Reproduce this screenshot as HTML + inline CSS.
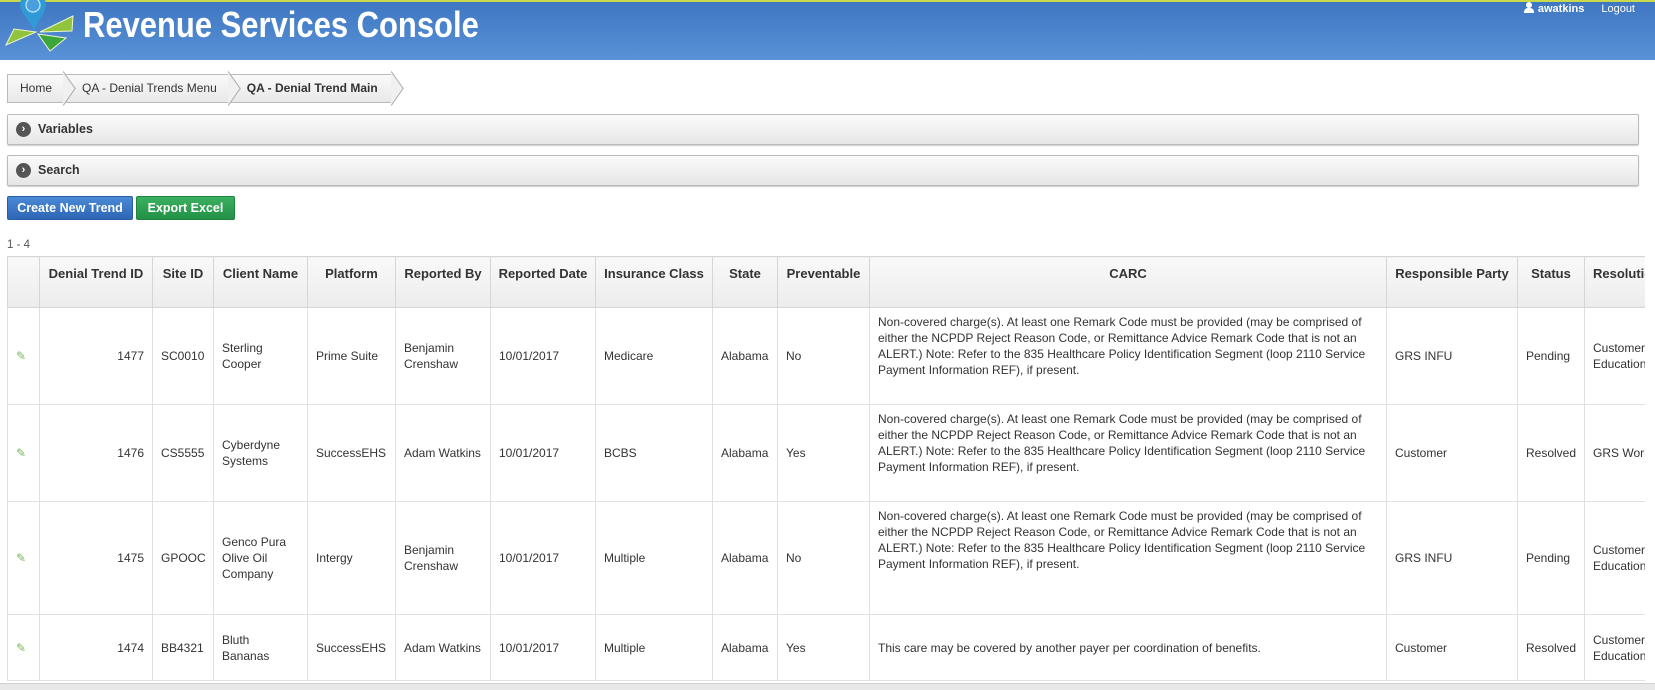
<!DOCTYPE html>
<html><head><meta charset="utf-8"><style>
*{box-sizing:border-box;margin:0;padding:0}
body{width:1655px;height:690px;overflow:hidden;background:#fff;font-family:"Liberation Sans",Arial,sans-serif;font-size:12px;color:#333;position:relative}
.hdr{position:absolute;left:0;top:0;width:1655px;height:60px;background:linear-gradient(#3e76c2,#5a92d7);border-top:2px solid #c8d94a}
.title{position:absolute;left:83px;top:2px;color:#fff;font-weight:bold;font-size:36px;transform:scaleX(0.86);transform-origin:0 0}
.user{position:absolute;right:20px;top:0;color:#fff;font-size:11px;font-weight:bold}
.bc{position:absolute;left:7px;top:74px;height:29px;display:flex;border:1px solid #bbb;border-right:none;background:linear-gradient(#fafafa,#e8e8e8)}
.bc div{padding:0 14px 0 12px;line-height:27px;font-size:12px;position:relative}
.bc div:after{content:"";position:absolute;right:-8px;top:3px;width:20px;height:20px;border-right:1px solid #aaa;border-top:1px solid #aaa;transform:rotate(45deg) skew(10deg,10deg);background:linear-gradient(45deg,transparent 50%,#f0f0f0 50%);z-index:1}
.bc div.l{font-weight:bold;padding-right:16px}
.bc div+div{padding-left:16px}
.panel{position:absolute;left:7px;width:1632px;height:31px;border:1px solid #bbb;border-radius:2px;background:linear-gradient(#fbfbfb,#e6e6e6);box-shadow:0 1px 1px #ccc;font-weight:bold;font-size:12.5px;line-height:29px;padding-left:30px}
.panel i{position:absolute;left:8px;top:7px;width:15px;height:15px;border-radius:50%;background:#555;color:#fff;font-style:normal;font-size:11px;line-height:15px;text-align:center}
.btn{position:absolute;top:196px;height:24px;line-height:22px;color:#fff;font-weight:bold;font-size:12.5px;text-align:center;border-radius:2px}
.cnt{position:absolute;left:7px;top:239px;font-size:11.5px;color:#555}
table{position:absolute;left:7px;top:256px;border-collapse:collapse;table-layout:fixed;width:1680px}
th{background:linear-gradient(#f9f9f9,#ececec);height:51px;font-size:13px;border:1px solid #d6d6d6;font-weight:bold;vertical-align:top;padding-top:9px;color:#333;white-space:nowrap;overflow:hidden}
td{border:1px solid #e0e0e0;vertical-align:middle;padding:0 8px;line-height:16px;font-size:12px}
.r{text-align:right}
.clip{position:absolute;left:0;top:0;width:1645px;height:684px;overflow:hidden}
.foot{position:absolute;left:0;top:683px;width:1655px;height:7px;background:#e8e8e8;border-top:1px solid #d0d0d0}
</style></head><body>
<div class="hdr">
<svg style="position:absolute;left:0;top:-2px" width="90" height="60" viewBox="0 0 90 60">
<path d="M20 4 C20 -8 46 -8 46 4 C46 14 36 22 34 32 C32 22 20 14 20 4Z" fill="#2f9ad6"/>
<circle cx="33" cy="5" r="7" fill="#4aa0dc" stroke="#c8e8f8" stroke-width="1.2"/>
<path d="M6 45 L14 29 L36 32 Z" fill="#8fc43c" stroke="#f0f4d0" stroke-width="1"/>
<path d="M40 32 L73 16 L72 31 Z" fill="#8fc43c" stroke="#f0f4d0" stroke-width="1"/>
<path d="M38 34 L66 38 L50 51 Z" fill="#3ba63a" stroke="#f0f4d0" stroke-width="1"/>
</svg>
<div class="title">Revenue Services Console</div>
<div class="user"><span style="display:inline-block;width:10px;height:11px;vertical-align:-1px;margin-right:4px;position:relative"><span style="position:absolute;left:2px;top:0;width:6px;height:6px;border-radius:50%;background:#fff"></span><span style="position:absolute;left:0;top:6px;width:10px;height:5px;border-radius:4px 4px 0 0;background:#fff"></span></span>awatkins<span style="margin-left:17px;font-weight:normal">Logout</span></div>
</div>
<div class="bc"><div>Home</div><div>QA - Denial Trends Menu</div><div class="l">QA - Denial Trend Main</div></div>
<div class="panel" style="top:114px"><i>›</i>Variables</div>
<div class="panel" style="top:155px"><i>›</i>Search</div>
<div class="btn" style="left:7px;width:126px;background:linear-gradient(#4a8ad6,#2d66b5);border:1px solid #2a5da5">Create New Trend</div>
<div class="btn" style="left:136px;width:99px;background:linear-gradient(#3bb060,#239146);border:1px solid #1f8240">Export Excel</div>
<div class="cnt">1 - 4</div>
<div class="clip">
<table>
<colgroup><col style="width:32px"><col style="width:113px"><col style="width:61px"><col style="width:94px"><col style="width:88px"><col style="width:95px"><col style="width:105px"><col style="width:117px"><col style="width:65px"><col style="width:92px"><col style="width:517px"><col style="width:131px"><col style="width:67px"><col style="width:103px"></colgroup>
<tr><th></th><th>Denial Trend ID</th><th>Site ID</th><th>Client Name</th><th>Platform</th><th>Reported By</th><th>Reported Date</th><th>Insurance Class</th><th>State</th><th>Preventable</th><th>CARC</th><th>Responsible Party</th><th>Status</th><th style="text-align:left;padding-left:8px">Resolution</th></tr>
<tr style="height:97px"><td style="color:#7cb85b">✎</td><td class="r">1477</td><td>SC0010</td><td>Sterling Cooper</td><td>Prime Suite</td><td>Benjamin Crenshaw</td><td>10/01/2017</td><td>Medicare</td><td>Alabama</td><td>No</td><td style="vertical-align:top;padding-top:6px">Non-covered charge(s). At least one Remark Code must be provided (may be comprised of either the NCPDP Reject Reason Code, or Remittance Advice Remark Code that is not an ALERT.) Note: Refer to the 835 Healthcare Policy Identification Segment (loop 2110 Service Payment Information REF), if present.</td><td>GRS INFU</td><td>Pending</td><td>Customer Education</td></tr>
<tr style="height:97px"><td style="color:#7cb85b">✎</td><td class="r">1476</td><td>CS5555</td><td>Cyberdyne Systems</td><td>SuccessEHS</td><td style="white-space:nowrap">Adam Watkins</td><td>10/01/2017</td><td>BCBS</td><td>Alabama</td><td>Yes</td><td style="vertical-align:top;padding-top:6px">Non-covered charge(s). At least one Remark Code must be provided (may be comprised of either the NCPDP Reject Reason Code, or Remittance Advice Remark Code that is not an ALERT.) Note: Refer to the 835 Healthcare Policy Identification Segment (loop 2110 Service Payment Information REF), if present.</td><td>Customer</td><td>Resolved</td><td style="white-space:nowrap">GRS Workflow</td></tr>
<tr style="height:113px"><td style="color:#7cb85b">✎</td><td class="r">1475</td><td>GPOOC</td><td>Genco Pura Olive Oil Company</td><td>Intergy</td><td>Benjamin Crenshaw</td><td>10/01/2017</td><td>Multiple</td><td>Alabama</td><td>No</td><td style="vertical-align:top;padding-top:6px">Non-covered charge(s). At least one Remark Code must be provided (may be comprised of either the NCPDP Reject Reason Code, or Remittance Advice Remark Code that is not an ALERT.) Note: Refer to the 835 Healthcare Policy Identification Segment (loop 2110 Service Payment Information REF), if present.</td><td>GRS INFU</td><td>Pending</td><td>Customer Education</td></tr>
<tr style="height:66px"><td style="color:#7cb85b">✎</td><td class="r">1474</td><td>BB4321</td><td>Bluth Bananas</td><td>SuccessEHS</td><td style="white-space:nowrap">Adam Watkins</td><td>10/01/2017</td><td>Multiple</td><td>Alabama</td><td>Yes</td><td>This care may be covered by another payer per coordination of benefits.</td><td>Customer</td><td>Resolved</td><td>Customer Education</td></tr>
</table>
</div>
<div class="foot"></div>
</body></html>
